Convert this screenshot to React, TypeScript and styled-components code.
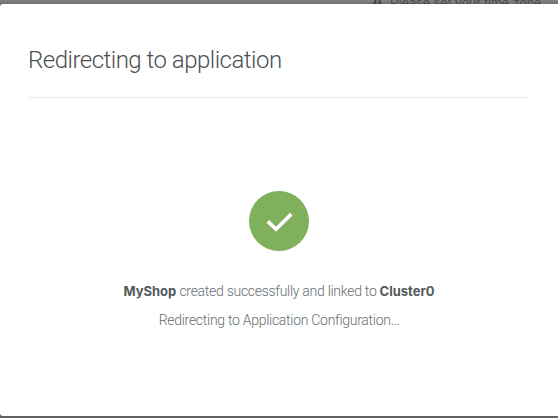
import React from "react";
import styled, { createGlobalStyle } from "styled-components";

const GlobalStyle = createGlobalStyle`
  *, *::before, *::after { box-sizing: border-box; }
  html, body { margin: 0; padding: 0; overflow: hidden; }
`;

const Page = styled.div`
  display: flex;
  flex-direction: column;
  width: 558px;
  height: 418px;
  overflow: hidden;
  background: #606163;
  font-family: "Liberation Sans", Arial, sans-serif;
`;

const Backdrop = styled.div`
  display: flex;
  flex: none;
  align-items: flex-end;
  height: 4px;
  padding-left: 371px;
  overflow: hidden;
  background: linear-gradient(#808080 0 1px, #7c7c7c 2px, #6c6c6c 4px);
  color: #494949;
`;

const WarningIcon = styled.svg`
  flex: none;
  width: 13px;
  height: 12px;
  margin-bottom: -3px;
`;

const Notice = styled.span`
  flex: none;
  margin: 0 0 -6px 6px;
  font-size: 13px;
  line-height: 15px;
  letter-spacing: 0.07px;
  white-space: nowrap;
`;

const Dialog = styled.section`
  flex: none;
  height: 412px;
  padding: 0 29px;
  border-radius: 3px 0 0 3px;
  background: #fff;
`;

const Header = styled.header`
  height: 94px;
  padding-top: 42px;
  border-bottom: 1px solid #e9eaeb;
`;

const Title = styled.h1`
  margin: 0 0 0 -1px;
  color: #494f53;
  font-family: Roboto, sans-serif;
  font-size: 24px;
  font-weight: 300;
  line-height: 28px;
  letter-spacing: -0.5px;
  white-space: nowrap;
`;

const Content = styled.div`
  display: flex;
  flex-direction: column;
  align-items: center;
  padding-top: 93px;
`;

const SuccessIcon = styled.svg`
  display: block;
  width: 60px;
  height: 60px;
  margin-bottom: 26px;
`;

const Message = styled.p`
  height: 29px;
  margin: 0;
  color: #686d70;
  font-family: Roboto, sans-serif;
  font-size: 14px;
  font-weight: 300;
  line-height: 29px;
  letter-spacing: -0.28px;
  white-space: nowrap;
`;

const Name = styled.strong`
  color: #54595c;
  font-family: Inter, sans-serif;
  font-size: 13px;
  font-weight: 700;
  line-height: 1;
  letter-spacing: 0;
`;

export default function App() {
  return (
    <>
      <GlobalStyle />
      <Page>
        <Backdrop>
          <WarningIcon viewBox="0 0 13 12" aria-hidden="true">
            <path fill="currentColor" fillRule="evenodd" d="M6.5 0 13 12H0ZM5.5 3.5v5h2v-5Zm0 6v1.5h2v-1.5Z" />
          </WarningIcon>
          <Notice>Please set your time zone</Notice>
        </Backdrop>
        <Dialog role="dialog" aria-labelledby="dialog-title">
          <Header>
            <Title id="dialog-title">Redirecting to application</Title>
          </Header>
          <Content>
            <SuccessIcon viewBox="0 0 60 60" aria-hidden="true">
              <circle cx="30" cy="30" r="30" fill="#7fb05c" />
              <path d="m18.8 30.4 8.2 7.9 15.3-15.2" fill="none" stroke="#fff" strokeWidth="3.6" />
            </SuccessIcon>
            <Message>
              <Name>MyShop</Name> created successfully and linked to <Name>Cluster0</Name>
            </Message>
            <Message>Redirecting to Application Configuration…</Message>
          </Content>
        </Dialog>
      </Page>
    </>
  );
}
